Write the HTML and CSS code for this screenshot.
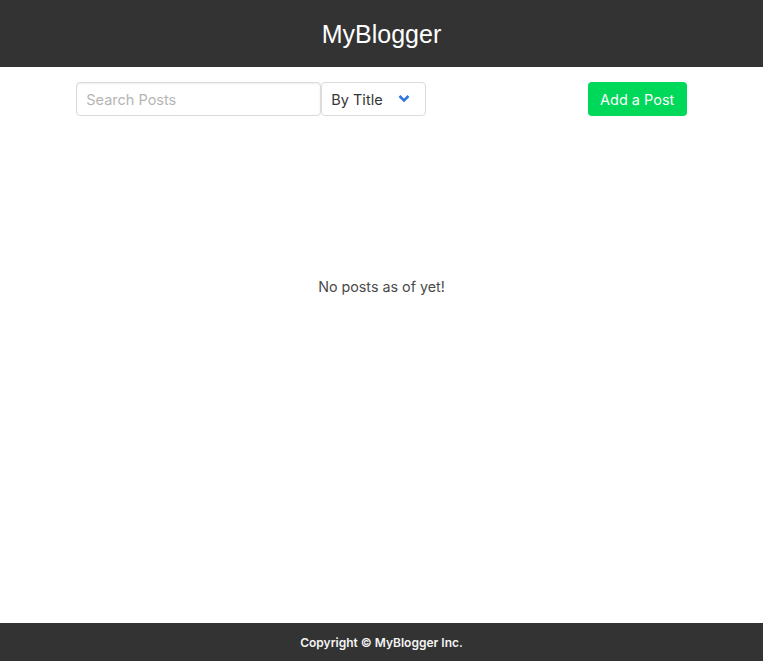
FILE: index.html
```html
<!DOCTYPE html>
<html>
<head>
<meta charset="utf-8">
<link rel="stylesheet" href="styles.css">
</head>
<body>
<header class="topbar"><h1 class="brand">MyBlogger</h1></header>
<main class="main">
  <div class="toolbar">
    <div class="search-group">
      <input class="search" type="text" placeholder="Search Posts">
      <div class="select">
        <span class="select-label">By Title</span>
        <svg class="chev" width="12" height="9" viewBox="0 0 12 9"><path d="M1.5 2 L6 6.5 L10.5 2" fill="none" stroke="#3273dc" stroke-width="2.6"/></svg>
      </div>
    </div>
    <button class="add-btn">Add a Post</button>
  </div>
  <p class="empty">No posts as of yet!</p>
</main>
<footer class="footer">Copyright © MyBlogger Inc.</footer>
</body>
</html>
```
FILE: styles.css
```css
* { box-sizing: border-box; }
html, body { height: 100%; }
body {
  margin: 0;
  display: flex;
  flex-direction: column;
  font-family: Inter, "Open Sans", sans-serif;
  color: #4a4a4a;
  background: #fff;
}
.topbar {
  background: #333333;
  height: 67px;
  display: flex;
  align-items: center;
  justify-content: center;
}
.brand {
  margin: 0;
  font-family: "Liberation Sans", Arial, sans-serif;
  font-weight: 400;
  font-size: 25px;
  color: #fff;
  padding-top: 2px;
}
.main {
  flex: 1;
  width: 80%;
  margin: 0 auto;
  padding-top: 15px;
}
.toolbar {
  display: flex;
  justify-content: space-between;
  align-items: center;
}
.search-group { display: flex; }
.search {
  width: 245px;
  height: 34px;
  border: 1px solid #dbdbdb;
  border-radius: 4px;
  padding: 0 9px;
  font-family: inherit;
  font-size: 14.5px;
  color: #363636;
  box-shadow: inset 0 1px 2px rgba(10,10,10,0.08);
  outline: none;
}
.search::placeholder { color: #b5b5b5; }
.select {
  width: 105px;
  height: 34px;
  border: 1px solid #dbdbdb;
  border-radius: 4px;
  display: flex;
  align-items: center;
  justify-content: space-between;
  padding: 0 15px 0 9px;
  font-size: 14.5px;
  color: #363636;
}
.chev { margin-top: -2px; }
.add-btn {
  height: 34px;
  width: 99px;
  border: none;
  border-radius: 4px;
  background: #00d85a;
  color: #fff;
  font-family: inherit;
  font-size: 14.5px;
  padding: 0;
}
.empty {
  text-align: center;
  margin: 162px 0 0;
  font-size: 14.3px;
  color: #4a4a4a;
}
.footer {
  background: #333333;
  height: 38px;
  display: flex;
  align-items: center;
  justify-content: center;
  color: #f5f5f5;
  font-family: Inter, sans-serif;
  font-weight: 600;
  font-size: 12px;
}
```
